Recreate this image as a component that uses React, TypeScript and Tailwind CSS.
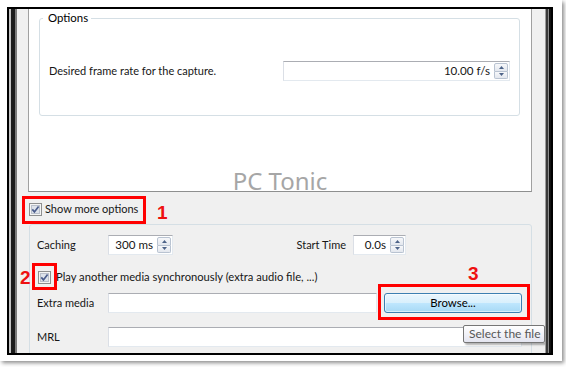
import React from "react";

const Arrow = ({ up }: { up?: boolean }) => (
  <svg width="5" height="3" viewBox="0 0 5 3">
    <path d={up ? "M0 3 L2.5 0 L5 3 Z" : "M0 0 L2.5 3 L5 0 Z"} fill="#4d6388" />
  </svg>
);

const SpinBox = ({ value, className }: { value: string; className: string }) => (
  <div
    className={`flex h-[20px] items-stretch border border-[#e3e9ef] border-t-[#abadb3] border-l-[#dbdfe6] bg-white ${className}`}
  >
    <div className="flex flex-1 items-center justify-end pr-[4px] text-[11.6px] leading-none">
      {value}
    </div>
    <div className="my-[1px] mr-[1px] flex w-[14px] flex-col">
      <div className="flex flex-1 items-center justify-center rounded-t-[2px] border border-[#b9c3d1] bg-[linear-gradient(#f7f8fa,#e3e7ee)]">
        <Arrow up />
      </div>
      <div className="flex flex-1 items-center justify-center rounded-b-[2px] border border-t-0 border-[#b9c3d1] bg-[linear-gradient(#f7f8fa,#e3e7ee)]">
        <Arrow />
      </div>
    </div>
  </div>
);

const TextField = ({ className }: { className: string }) => (
  <div
    className={`h-[20px] border border-[#e3e9ef] border-t-[#abadb3] border-l-[#dbdfe6] bg-white ${className}`}
  />
);

const CheckBox = () => (
  <svg width="13" height="13" viewBox="0 0 13 13" className="shrink-0">
    <rect x="0.5" y="0.5" width="12" height="12" fill="#f4f4f4" stroke="#8e8f8f" />
    <rect x="2.5" y="2.5" width="8" height="8" fill="#dde2ea" stroke="#b9bfca" />
    <path d="M3.3 6.4 L5.4 8.9 L9.6 3.4" stroke="#4a5c8c" strokeWidth="1.7" fill="none" />
  </svg>
);

export default function App() {
  return (
    <div className="h-[367px] w-[566px] overflow-hidden bg-white font-['Lato','Noto_Sans',sans-serif] text-[#161616]">
      <div className="h-[361px] w-[562px] bg-white pl-[7px] pt-[7px] shadow-[2px_2px_4px_rgba(0,0,0,0.45)]">
        <div className="flex h-[348px] w-[546px] border-2 border-black">
          {/* left window edge */}
          <div className="w-[2px] bg-[#c4c4c4]" />
          <div className="w-[4px] bg-[#1c1c1c]" />
          <div className="w-[2px] bg-[#7c7c7c]" />

          <div className="relative flex w-[528px] flex-col overflow-hidden bg-[#f0f0f0] text-[11px]">
            {/* white capture panel */}
            <div className="ml-[11px] flex h-[183px] w-[504px] shrink-0 flex-col border-x border-b border-x-[#a0a0a0] border-b-[#8e8f8f] bg-white">
              <fieldset className="ml-[10px] mt-[1px] h-[106px] w-[481px] rounded-[3px] border border-[#d5dfe5]">
                <legend className="ml-[3px] pl-[5px] pr-[3px] text-[11.4px] leading-[16px] text-black">
                  Options
                </legend>
                <div className="mt-[35px] flex items-center justify-between px-[9px]">
                  <span>Desired frame rate for the capture.</span>
                  <SpinBox value="10.00 f/s" className="w-[227px]" />
                </div>
              </fieldset>
              <div className="mt-auto text-center font-['Noto_Sans',sans-serif] text-[24px] leading-[20px] text-[#a6a6a6]">
                PC Tonic
              </div>
            </div>

            {/* show more options */}
            <div className="mt-[4px] flex h-[26px] shrink-0 items-center gap-[3px] pl-[12px]">
              <CheckBox />
              <span>Show more options</span>
            </div>

            {/* extra options group */}
            <div className="ml-[12px] mt-[2px] h-[140px] w-[503px] shrink-0 rounded-[3px] border border-[#d5dfe5]">
              <div className="mt-[10px] flex h-[20px] items-center pl-[7px]">
                <span className="w-[71px]">Caching</span>
                <SpinBox value="300 ms" className="w-[65px]" />
                <span className="w-[180px] pr-[7px] text-right">Start Time</span>
                <SpinBox value="0.0s" className="w-[53px]" />
              </div>
              <div className="mt-[12px] flex h-[20px] items-center gap-[5px] pl-[8px]">
                <CheckBox />
                <span className="text-[11.2px]">Play another media synchronously (extra audio file, ...)</span>
              </div>
              <div className="mt-[6px] flex h-[20px] items-center pl-[7px]">
                <span className="w-[71px]">Extra media</span>
                <TextField className="w-[269px]" />
                <div className="ml-[7px] flex h-[20px] w-[138px] items-center justify-center rounded-[3px] border border-[#3c7fb1] bg-[linear-gradient(#eaf6fd_0%,#d9f0fc_48%,#bee6fd_52%,#a7d9f5_100%)] text-[11.4px] text-black shadow-[inset_0_0_0_1px_rgba(255,255,255,0.55)]">
                  Browse...
                </div>
              </div>
              <div className="mt-[14px] flex h-[20px] items-center pl-[7px]">
                <span className="w-[71px]">MRL</span>
                <TextField className="w-[414px]" />
              </div>
            </div>

            {/* annotations */}
            <div className="absolute left-[5px] top-[187px] h-[28px] w-[124px] border-[3px] border-[#ff0000]" />
            <div className="absolute left-[140px] top-[194px] font-['Liberation_Sans',sans-serif] text-[19px] font-bold leading-none text-[#ee1111]">
              1
            </div>
            <div className="absolute left-[15px] top-[254px] h-[27px] w-[25px] border-[3px] border-[#ff0000]" />
            <div className="absolute left-[3px] top-[259px] font-['Liberation_Sans',sans-serif] text-[19px] font-bold leading-none text-[#ee1111]">
              2
            </div>
            <div className="absolute left-[361px] top-[275px] h-[36px] w-[152px] border-[3px] border-[#ff0000]" />
            <div className="absolute left-[451px] top-[255px] font-['Liberation_Sans',sans-serif] text-[19px] font-bold leading-none text-[#ee1111]">
              3
            </div>

            {/* tooltip */}
            <div className="absolute left-[446px] top-[316px] h-[18px] w-[82px] whitespace-nowrap rounded-[2px] border border-[#767676] bg-[linear-gradient(#ffffff,#e4e5f0)] pl-[5px] text-[12px] leading-[16px] text-[#575757] shadow-[2px_2px_2px_rgba(0,0,0,0.3)]">
              Select the file
            </div>
          </div>

          {/* right window edge */}
          <div className="w-[1px] bg-[#9c9c9c]" />
          <div className="w-[2px] bg-[#3a3a3a]" />
          <div className="w-[1px] bg-[#8c8c8c]" />
          <div className="w-[2px] bg-[#111111]" />
        </div>
      </div>
    </div>
  );
}
